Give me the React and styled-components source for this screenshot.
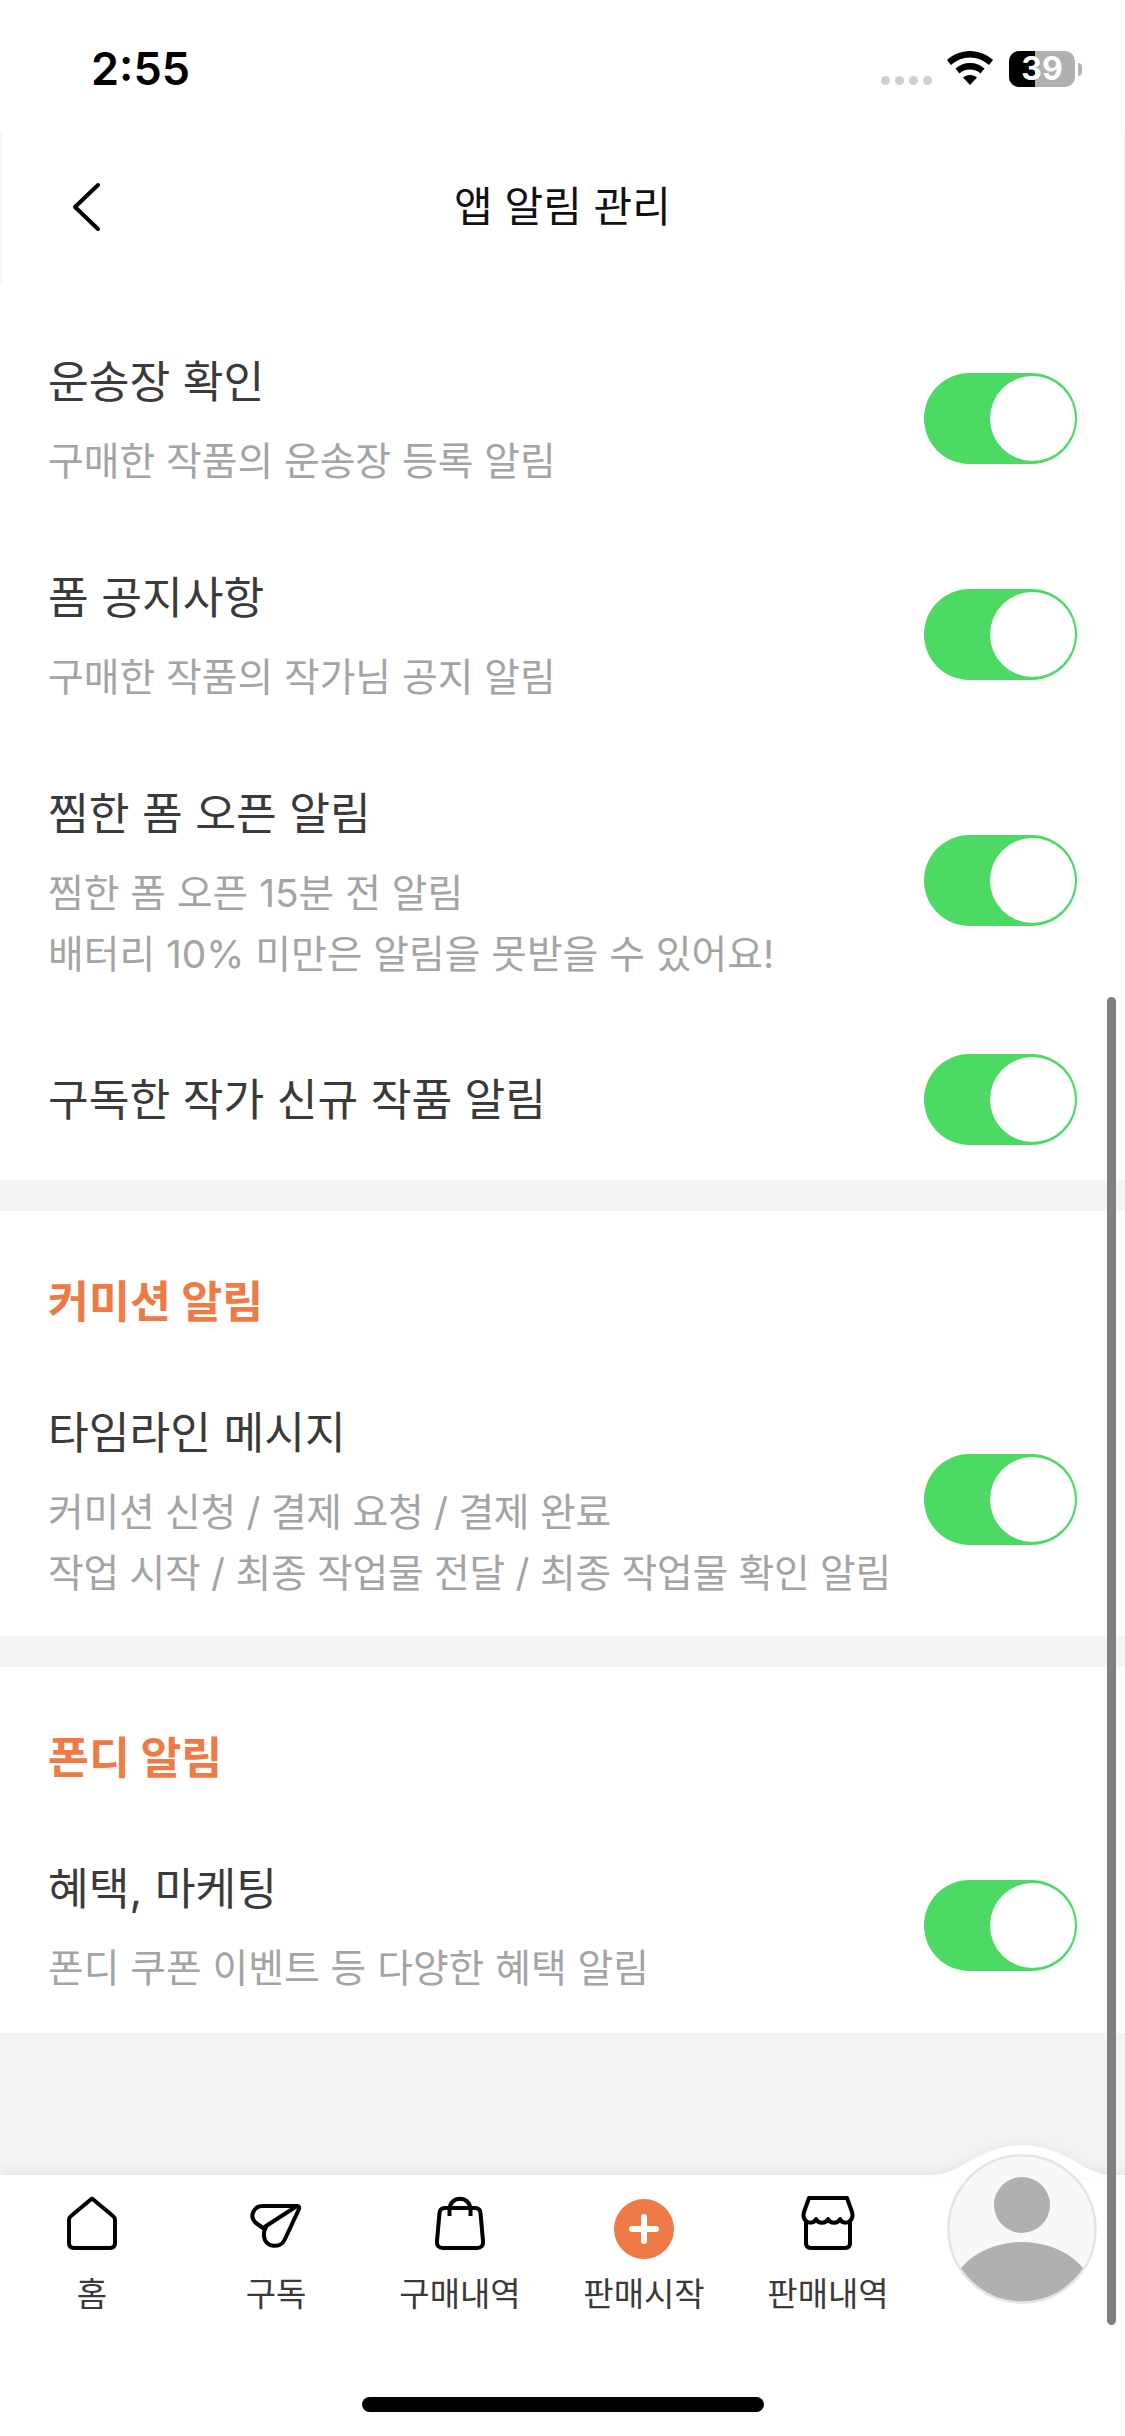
import React from "react";
import styled, { createGlobalStyle } from "styled-components";

const Global = createGlobalStyle`
  html, body { margin: 0; padding: 0; background: #fff; }
  * { box-sizing: border-box; }
`;

const Page = styled.div`
  position: relative;
  width: 1125px;
  height: 2436px;
  overflow: hidden;
  display: flex;
  flex-direction: column;
  background: #fff;
  font-family: Inter, "Noto Sans CJK KR", sans-serif;
  color: #333;
`;

const StatusBar = styled.div`
  height: 132px;
  flex: none;
  display: flex;
  align-items: flex-start;
  justify-content: space-between;
  padding: 43px 43px 0 91px;
`;
const Time = styled.div`
  font-size: 45px;
  line-height: 52px;
  font-weight: 600;
  color: #000;
  letter-spacing: 0;
`;
const StatusIcons = styled.div`
  display: flex;
  align-items: flex-start;
  margin-top: 8px;
`;
const Dots = styled.div`
  display: flex;
  gap: 5px;
  margin-top: 25px;
  margin-right: 15px;
`;
const Dot = styled.span`
  width: 9px;
  height: 9px;
  border-radius: 50%;
  background: #cfcfcf;
`;
const Battery = styled.div`
  position: relative;
  width: 66px;
  height: 36px;
  margin-left: 16px;
  border-radius: 10px;
  background: #b0b0b0;
  display: flex;
  align-items: center;
  justify-content: center;
  font-size: 32px;
  font-weight: 700;
  color: #fff;
  &::before {
    content: "";
    position: absolute;
    left: 0;
    top: 0;
    bottom: 0;
    width: 26px;
    border-radius: 10px 0 0 10px;
    background: #000;
  }
`;
const BatteryText = styled.span`
  position: relative;
  line-height: 36px;
`;
const BatteryTip = styled.span`
  width: 4px;
  height: 13px;
  margin: 12px 0 0 3px;
  border-radius: 0 4px 4px 0;
  background: #b5b5b5;
`;

const Header = styled.header`
  height: 151px;
  flex: none;
  display: flex;
  align-items: center;
  justify-content: center;
  position: relative;
  border-left: 2px solid #f6f6f6;
  border-right: 2px solid #f6f6f6;
`;
const HeaderTitle = styled.h1`
  margin: 0 0 1px;
  font-size: 42px;
  line-height: 60px;
  font-weight: 400;
  color: #111;
`;
const BackButton = styled.button`
  position: absolute;
  left: 70px;
  top: 50px;
  padding: 0;
  border: 0;
  background: none;
  display: flex;
`;

const Main = styled.main`
  flex: 1;
  min-height: 0;
  overflow: hidden;
  background: #f3f4f6;
`;
const Section = styled.section`
  background: #fff;
  margin-bottom: 31px;
  padding-top: ${(p) => (p.$first ? "27px" : "0")};
`;
const SectionTitle = styled.h2`
  margin: 0;
  height: 150px;
  padding: 65px 48px 0;
  font-size: 44.5px;
  line-height: 52px;
  font-weight: 700;
  color: #ee7b45;
`;
const Row = styled.div`
  display: flex;
  align-items: center;
  justify-content: space-between;
  padding: ${(p) => (p.$single ? "35px 48px" : `39px 48px ${p.$tight ? 33 : 35}px`)};
`;
const Copy = styled.div`
  min-width: 0;
`;
const RowTitle = styled.div`
  padding-top: ${(p) => (p.$single ? "1px" : "3px")};
  font-size: 44.3px;
  line-height: 61px;
  font-weight: 400;
  color: #3a3a3a;
`;
const RowSub = styled.div`
  margin-top: 17px;
  font-size: 38.8px;
  line-height: 61px;
  font-weight: 400;
  letter-spacing: ${(p) => (p.$tight ? "-0.25px" : "0")};
  color: #a4a4a4;
`;
const Toggle = styled.div`
  flex: none;
  width: 153px;
  height: 91px;
  margin-top: ${(p) => (p.$single ? "0" : "-4px")};
  border-radius: 46px;
  background: #4cd964;
  position: relative;
  &::after {
    content: "";
    position: absolute;
    right: 2px;
    top: 3px;
    width: 85px;
    height: 85px;
    border-radius: 50%;
    background: #fff;
  }
`;

const BottomNav = styled.nav`
  flex: none;
  position: relative;
  height: 261px;
  background: #fff;
  box-shadow: 0 -3px 12px rgba(0, 0, 0, 0.07);
  padding: 21px 205px 0 0;
  display: grid;
  grid-template-columns: repeat(5, 184px);
  align-items: start;
`;
const NavItem = styled.div`
  display: flex;
  flex-direction: column;
  align-items: center;
`;
const NavIcon = styled.div`
  height: 64px;
  display: flex;
  align-items: flex-start;
  justify-content: center;
`;
const NavLabel = styled.span`
  margin-top: 10px;
  font-size: 33px;
  line-height: 48px;
  color: #3a3a3a;
`;
const AddCircle = styled.div`
  width: 60px;
  height: 60px;
  margin-top: 3px;
  border-radius: 50%;
  background: #ee7b45;
  display: flex;
  align-items: center;
  justify-content: center;
`;
const Halo = styled.svg`
  position: absolute;
  left: 927px;
  top: -30px;
  filter: drop-shadow(0 -2px 6px rgba(0, 0, 0, 0.05));
`;
const Avatar = styled.svg`
  position: absolute;
  left: 947px;
  top: -21px;
`;
const HomeIndicator = styled.div`
  position: absolute;
  left: 362px;
  top: 222px;
  width: 402px;
  height: 15px;
  border-radius: 8px;
  background: #000;
`;
const Scrollbar = styled.div`
  position: absolute;
  left: 1107px;
  top: 997px;
  width: 9px;
  height: 1328px;
  border-radius: 5px;
  background: #808080;
`;

const IconStroke = styled.svg`
  display: block;
  fill: none;
  stroke: #000;
  stroke-width: 4;
  stroke-linejoin: round;
  stroke-linecap: round;
`;

const HomeIcon = () => (
  <IconStroke width="50" height="54" viewBox="0 0 50 54">
    <path d="M25 2.5 L46 20 Q48 21.5 48 24 V47 Q48 52 43 52 H7 Q2 52 2 47 V24 Q2 21.5 4 20 Z" />
  </IconStroke>
);
const PlaneIcon = () => (
  <IconStroke width="52" height="46" viewBox="0 0 52 46" style={{ marginTop: 7 }}>
    <path d="M47 3 H13 C3 3 -1 14 6 20 L13 25 Z" />
    <path d="M47 3 Q50 3 49 6 L35 36 C31 46 15 45 14 33 Q13.500 28 16 24" />
  </IconStroke>
);
const BagIcon = () => (
  <IconStroke width="50" height="54" viewBox="0 0 50 54">
    <path d="M10 12 H40 Q45 12 45.500 17 L48 45 Q48.500 52 42 52 H8 Q1.500 52 2 45 L4.500 17 Q5 12 10 12 Z" />
    <path d="M14.500 20 V14 C14.500 -1 35.500 -1 35.500 14 V20" strokeLinecap="butt" />
  </IconStroke>
);
const StoreIcon = () => (
  <IconStroke width="54" height="54" viewBox="0 0 54 54">
    <path d="M8 2 H46 L51 16 Q52 20 51 22 C49 28 41 28 39 23 C37 28 29 28 27 23 C25 28 17 28 15 23 C13 28 5 28 3 22 Q2 20 3 16 Z" />
    <path d="M5 26 V47 Q5 52 10 52 H44 Q49 52 49 47 V26" />
  </IconStroke>
);
const WifiIcon = () => (
  <svg width="46" height="34" viewBox="0 0 46 34">
    <path d="M23 0 C14 0 6 3.500 0 9 L4 14 C9 9.500 16 6.500 23 6.500 C30 6.500 37 9.500 42 14 L46 9 C40 3.500 32 0 23 0 Z" fill="#000" />
    <path d="M23 12 C17 12 12.500 14 8.500 17.500 L12.500 22.500 C15 20 19 18.500 23 18.500 C27 18.500 31 20 33.500 22.500 L37.500 17.500 C33.500 14 29 12 23 12 Z" fill="#000" />
    <path d="M23 24 C20 24 18 25 16 26.500 L23 34 L30 26.500 C28 25 26 24 23 24 Z" fill="#000" />
  </svg>
);

const rows = {
  first: [
    { t: "운송장 확인", s: ["구매한 작품의 운송장 등록 알림"] },
    { t: "폼 공지사항", s: ["구매한 작품의 작가님 공지 알림"] },
    { t: "찜한 폼 오픈 알림", s: ["찜한 폼 오픈 15분 전 알림", "배터리 10% 미만은 알림을 못받을 수 있어요!"] },
    { t: "구독한 작가 신규 작품 알림", s: [] },
  ],
  commission: [
    { t: "타임라인 메시지", s: ["커미션 신청 / 결제 요청 / 결제 완료", "작업 시작 / 최종 작업물 전달 / 최종 작업물 확인 알림"], tight: true },
  ],
  fondy: [{ t: "혜택, 마케팅", s: ["폰디 쿠폰 이벤트 등 다양한 혜택 알림"] }],
};

const SettingRow = ({ t, s, tight }) => (
  <Row $single={s.length === 0} $tight={tight}>
    <Copy>
      <RowTitle $single={s.length === 0}>{t}</RowTitle>
      {s.length > 0 && (
        <RowSub $tight={tight}>
          {s.map((line, i) => (
            <div key={i}>{line}</div>
          ))}
        </RowSub>
      )}
    </Copy>
    <Toggle $single={s.length === 0} />
  </Row>
);

export default function App() {
  return (
    <Page>
      <Global />
      <StatusBar>
        <Time>2:55</Time>
        <StatusIcons>
          <Dots>
            <Dot />
            <Dot />
            <Dot />
            <Dot />
          </Dots>
          <WifiIcon />
          <Battery>
            <BatteryText>39</BatteryText>
          </Battery>
          <BatteryTip />
        </StatusIcons>
      </StatusBar>
      <Header>
        <BackButton aria-label="back">
          <svg width="30" height="50" viewBox="0 0 30 50" fill="none" stroke="#000" strokeWidth="4" strokeLinecap="round" strokeLinejoin="round">
            <path d="M26 3 L3 25 L26 47" />
          </svg>
        </BackButton>
        <HeaderTitle>앱 알림 관리</HeaderTitle>
      </Header>
      <Main>
        <Section $first>
          {rows.first.map((r) => (
            <SettingRow key={r.t} {...r} />
          ))}
        </Section>
        <Section>
          <SectionTitle>커미션 알림</SectionTitle>
          {rows.commission.map((r) => (
            <SettingRow key={r.t} {...r} />
          ))}
        </Section>
        <Section>
          <SectionTitle>폰디 알림</SectionTitle>
          {rows.fondy.map((r) => (
            <SettingRow key={r.t} {...r} />
          ))}
        </Section>
      </Main>
      <BottomNav>
        <Halo width="190" height="32" viewBox="0 0 190 32">
          <path d="M0 32 L0 30 C18 30 24 26 36 20 C56 7 76 0 95 0 C114 0 134 7 154 20 C166 26 172 30 190 30 L190 32 Z" fill="#fff" />
        </Halo>
        <NavItem>
          <NavIcon><HomeIcon /></NavIcon>
          <NavLabel>홈</NavLabel>
        </NavItem>
        <NavItem>
          <NavIcon><PlaneIcon /></NavIcon>
          <NavLabel>구독</NavLabel>
        </NavItem>
        <NavItem>
          <NavIcon><BagIcon /></NavIcon>
          <NavLabel>구매내역</NavLabel>
        </NavItem>
        <NavItem>
          <NavIcon>
            <AddCircle>
              <svg width="30" height="30" viewBox="0 0 30 30" stroke="#fff" strokeWidth="6" strokeLinecap="round">
                <path d="M15 3 V27 M3 15 H27" />
              </svg>
            </AddCircle>
          </NavIcon>
          <NavLabel>판매시작</NavLabel>
        </NavItem>
        <NavItem>
          <NavIcon><StoreIcon /></NavIcon>
          <NavLabel>판매내역</NavLabel>
        </NavItem>
        <Avatar width="150" height="150" viewBox="0 0 150 150">
          <defs>
            <clipPath id="avatar-clip">
              <circle cx="75" cy="75" r="74" />
            </clipPath>
          </defs>
          <circle cx="75" cy="75" r="74" fill="#f8f8f8" />
          <g clipPath="url(#avatar-clip)">
            <circle cx="75" cy="51" r="28" fill="#b0b0b0" />
            <ellipse cx="75" cy="148" rx="74" ry="60" fill="#b0b0b0" />
          </g>
          <circle cx="75" cy="75" r="73.500" fill="none" stroke="#e4e4e4" strokeWidth="2.500" />
        </Avatar>
        <HomeIndicator />
      </BottomNav>
      <Scrollbar />
    </Page>
  );
}
